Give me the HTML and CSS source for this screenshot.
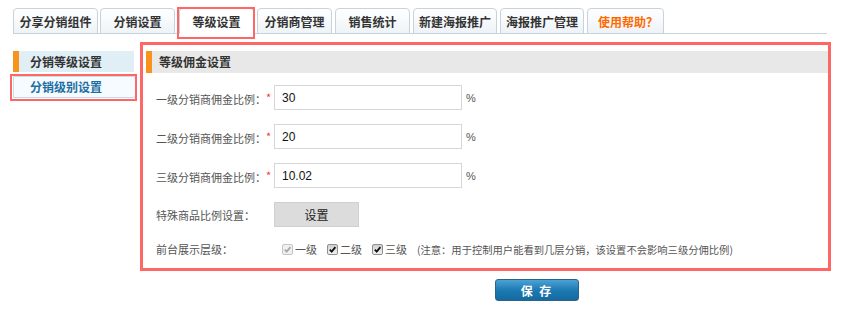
FILE: index.html
```html
<!DOCTYPE html>
<html lang="zh-CN">
<head>
    <meta charset="UTF-8">
    <meta name="viewport" content="width=device-width, initial-scale=1.0">
    <title>等级设置</title>
    <link rel="stylesheet" href="styles.css">
</head>
<body>
    <div class="tabs">
        <a class="tab">分享分销组件</a>
        <a class="tab">分销设置</a>
        <a class="tab active">等级设置</a>
        <a class="tab">分销商管理</a>
        <a class="tab">销售统计</a>
        <a class="tab">新建海报推广</a>
        <a class="tab">海报推广管理</a>
        <a class="tab help">使用帮助？</a>
    </div>

    <div class="wrap">
        <div class="side">
            <div class="side-title">分销等级设置</div>
            <div class="side-item current">分销级别设置</div>
        </div>

        <div class="main">
            <div class="box-head">等级佣金设置</div>

            <form class="form">
                <div class="row">
                    <label class="lbl">一级分销商佣金比例：<em>*</em></label>
                    <input class="txt" type="text" value="30">
                    <span class="unit">%</span>
                </div>
                <div class="row">
                    <label class="lbl">二级分销商佣金比例：<em>*</em></label>
                    <input class="txt" type="text" value="20">
                    <span class="unit">%</span>
                </div>
                <div class="row">
                    <label class="lbl">三级分销商佣金比例：<em>*</em></label>
                    <input class="txt" type="text" value="10.02">
                    <span class="unit">%</span>
                </div>
                <div class="row">
                    <label class="lbl">特殊商品比例设置：</label>
                    <button type="button" class="btn-gray">设置</button>
                </div>
                <div class="row row-check">
                    <label class="lbl">前台展示层级：</label>
                    <span class="chk">
                        <span class="box disabled"><svg viewBox="0 0 10 10"><path d="M2 5.2 L4.1 7.4 L8.2 2.4" /></svg></span>一级
                    </span>
                    <span class="chk">
                        <span class="box"><svg viewBox="0 0 10 10"><path d="M2 5.2 L4.1 7.4 L8.2 2.4" /></svg></span>二级
                    </span>
                    <span class="chk">
                        <span class="box"><svg viewBox="0 0 10 10"><path d="M2 5.2 L4.1 7.4 L8.2 2.4" /></svg></span>三级
                    </span>
                    <span class="note">(注意：用于控制用户能看到几层分销，该设置不会影响三级分佣比例)</span>
                </div>
            </form>
        </div>
    </div>

    <div class="actions">
        <button type="button" class="btn-save">保 存</button>
    </div>
</body>
</html>
```

FILE: styles.css
```css
* {
    margin: 0;
    padding: 0;
    box-sizing: border-box;
}

body {
    font-family: "Noto Sans CJK SC", "Liberation Sans", sans-serif;
    font-size: 12px;
    color: #555;
    background: #fff;
    width: 845px;
    height: 328px;
    overflow: hidden;
}

/* top tabs */
.tabs {
    display: flex;
    align-items: flex-end;
    width: 814px;
    margin: 8px 0 0 13px;
    height: 26px;
    border-bottom: 1px solid #c7d2dc;
}

.tab {
    position: relative;
    display: flex;
    align-items: center;
    justify-content: center;
    min-width: 75px;
    height: 26px;
    padding: 0 5px;
    margin-right: 3px;
    margin-bottom: -1px;
    border: 1px solid #c7d2dc;
    border-radius: 4px 4px 0 0;
    background: linear-gradient(#ffffff, #eef3f7);
    color: #333;
    font-weight: bold;
    font-size: 12px;
    cursor: pointer;
}

.tab:first-child {
    min-width: 85px;
    margin-right: 2px;
}

.tab.active {
    background: #fff;
    border-bottom-color: #fff;
    margin-left: 1px;
    margin-right: 3px;
}

.tab.active::after {
    content: "";
    position: absolute;
    top: -2px;
    left: -3px;
    right: -2px;
    bottom: -6px;
    border: 2px solid #ff6666;
}

.tab.help {
    color: #ff6a00;
    justify-content: flex-start;
    padding-left: 10px;
}

/* content */
.wrap {
    display: flex;
    align-items: flex-start;
    margin: 8px 0 0 13px;
}

.side {
    width: 121px;
    padding-top: 9px;
}

.side-title {
    height: 21px;
    line-height: 21px;
    padding-left: 11px;
    background: #e0eef5;
    border-left: 6px solid #f7941d;
    color: #333;
    font-weight: bold;
}

.side-item {
    position: relative;
    height: 22px;
    line-height: 20px;
    margin-top: 4px;
    padding-left: 16px;
    width: 123px;
    background: #f5fbfe;
    border: 1px solid #c9dde9;
    border-radius: 0 3px 3px 0;
    color: #1d6ea3;
    font-weight: bold;
}

.side-item.current::after {
    content: "";
    position: absolute;
    top: -3px;
    left: -4px;
    right: -2px;
    bottom: -4px;
    border: 2px solid #ff6666;
}

.main {
    width: 691px;
    margin-left: 6px;
    border: 3px solid #ff6666;
    padding: 6px 0 0 3px;
}

.box-head {
    height: 22px;
    line-height: 22px;
    background: #e8e8e8;
    border-left: 6px solid #f7941d;
    padding-left: 7px;
    color: #333;
    font-weight: bold;
}

.form {
    padding: 12px 0 8px 10px;
}

.row {
    display: flex;
    align-items: center;
    height: 25px;
    margin-bottom: 14px;
}

.row-check {
    height: 22px;
    margin-top: -3px;
    margin-bottom: 0;
}

.lbl {
    width: 118px;
    font-size: 11px;
    color: #555;
    white-space: nowrap;
}

.lbl em {
    font-style: normal;
    color: #ff3333;
    font-size: 11px;
    vertical-align: 2px;
}

.txt {
    width: 188px;
    height: 25px;
    padding-left: 7px;
    border: 1px solid #d6d6d6;
    font-family: "Liberation Sans", sans-serif;
    font-size: 12px;
    color: #111;
    outline: none;
}

.unit {
    margin-left: 4px;
    font-size: 11px;
    color: #555;
    font-family: "Liberation Sans", sans-serif;
}

.btn-gray {
    width: 85px;
    height: 25px;
    background: #dcdcdc;
    border: 1px solid #d0d0d0;
    font-family: "Noto Sans CJK SC", sans-serif;
    font-size: 12px;
    color: #222;
    cursor: pointer;
}

.chk {
    display: flex;
    align-items: center;
    font-size: 11px;
    color: #555;
    margin-left: 10px;
}

.chk:first-of-type {
    margin-left: 8px;
}

.box {
    display: inline-flex;
    width: 11px;
    height: 11px;
    margin-right: 2px;
    border: 1px solid #8f8f8f;
    border-radius: 2px;
    background: linear-gradient(#cfcfcf, #f2f2f2);
}

.box svg {
    width: 9px;
    height: 9px;
    fill: none;
    stroke: #111;
    stroke-width: 2;
}

.box.disabled {
    border-color: #c4c4c4;
    background: #f0f0f0;
}

.box.disabled svg {
    stroke: #a8a8a8;
}

.note {
    margin-left: 10px;
    font-size: 10.3px;
    color: #555;
    white-space: nowrap;
}

.actions {
    padding: 8px 0 0 495px;
}

.btn-save {
    width: 84px;
    height: 22px;
    border: 1px solid #2d6485;
    border-radius: 3px;
    background: linear-gradient(#4ba3d6, #1d7ab3 50%, #1569a0);
    color: #fff;
    font-family: "Noto Sans CJK SC", sans-serif;
    font-size: 12px;
    font-weight: bold;
    letter-spacing: 2px;
    cursor: pointer;
}
```
